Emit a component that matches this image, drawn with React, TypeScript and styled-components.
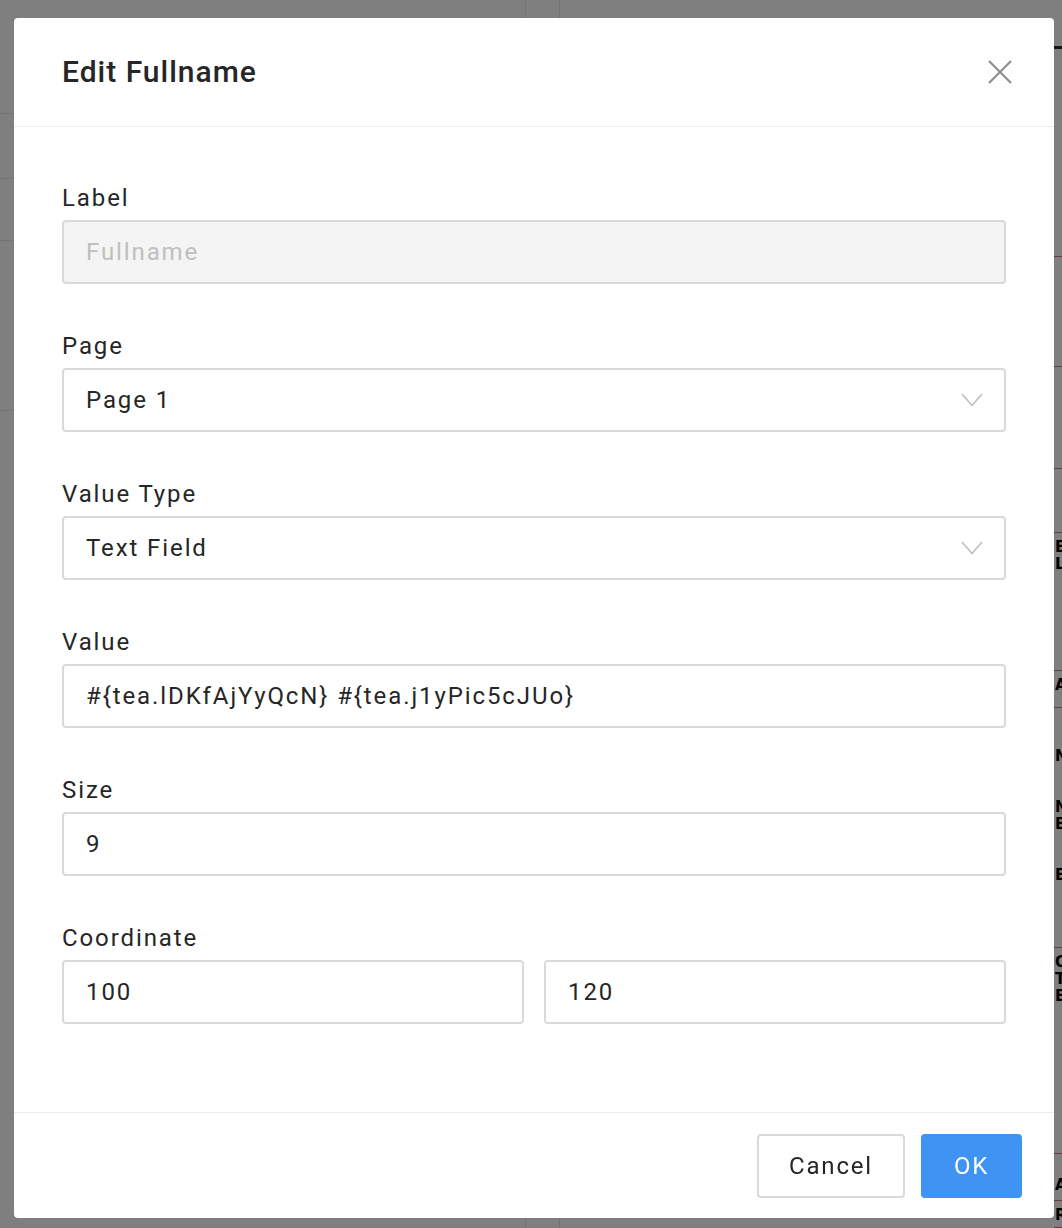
import React from 'react';
import styled, { createGlobalStyle } from 'styled-components';

const GlobalStyle = createGlobalStyle`
  html, body {
    margin: 0;
    padding: 0;
  }
  body {
    font-family: Roboto, "Liberation Sans", sans-serif;
    background: #ffffff;
  }
  * {
    box-sizing: border-box;
  }
`;

// underlying page, mostly hidden by the overlay
const Page = styled.div`
  width: 1062px;
  height: 1228px;
  display: grid;
  grid-template-columns: 526px 34px 494px 1fr;
  overflow: hidden;
`;

const PageCol = styled.div<{ $edge?: boolean }>`
  display: flex;
  flex-direction: column;
  border-right: ${(p) => (p.$edge ? '1px solid #e6e6e6' : 'none')};
`;

const PageRow = styled.div<{ $h: number; $line?: 'red' | 'dark' | 'grey' }>`
  height: ${(p) => p.$h}px;
  flex: none;
  border-bottom: ${(p) =>
    p.$line === 'red'
      ? '1px solid #d67272'
      : p.$line === 'dark'
      ? '3px solid #2a2a2a'
      : p.$line === 'grey'
      ? '1px solid #e6e6e6'
      : 'none'};
  padding: 6px 0 0 1px;
  font-family: "DejaVu Sans", sans-serif;
  font-size: 15px;
  font-weight: 700;
  line-height: 17px;
  color: #000;
  white-space: pre;
  overflow: hidden;
`;

const Overlay = styled.div`
  position: fixed;
  inset: 0;
  background: rgba(0, 0, 0, 0.5);
  padding: 18px 0 0 14px;
`;

const Modal = styled.div`
  width: 1040px;
  height: 1200px;
  background: #ffffff;
  border-radius: 4px;
  display: flex;
  flex-direction: column;
`;

const Header = styled.div`
  height: 109px;
  flex: none;
  border-bottom: 1px solid #ededed;
  display: flex;
  align-items: center;
  justify-content: space-between;
  padding: 0 42px 0 48px;
`;

const Title = styled.h2`
  margin: 0;
  font-size: 30px;
  font-weight: 500;
  color: #262626;
  letter-spacing: 1px;
  line-height: 36px;
`;

const CloseButton = styled.button`
  border: none;
  background: none;
  padding: 0;
  width: 24px;
  height: 24px;
  display: flex;
  cursor: pointer;
`;

const Body = styled.div`
  flex: 1;
  padding: 53px 48px 0 48px;
`;

const Field = styled.div`
  margin-bottom: 44px;
`;

const Label = styled.div`
  font-size: 24px;
  line-height: 36px;
  letter-spacing: 1.9px;
  color: #262626;
  margin-bottom: 4px;
`;

const Input = styled.input<{ $disabled?: boolean }>`
  display: block;
  width: 100%;
  height: 64px;
  border: 2px solid #dadada;
  border-radius: 4px;
  padding: 0 22px;
  font-family: Roboto, "Liberation Sans", sans-serif;
  font-size: 24px;
  letter-spacing: 1.9px;
  color: ${(p) => (p.$disabled ? '#bfbfbf' : '#262626')};
  background: ${(p) => (p.$disabled ? '#f4f4f4' : '#ffffff')};
  outline: none;
`;

const Select = styled.div`
  display: flex;
  align-items: center;
  justify-content: space-between;
  height: 64px;
  border: 2px solid #dadada;
  border-radius: 4px;
  padding: 0 21px 0 22px;
  font-size: 24px;
  letter-spacing: 1.9px;
  color: #262626;
`;

const Pair = styled.div`
  display: grid;
  grid-template-columns: 1fr 1fr;
  gap: 20px;
`;

const Footer = styled.div`
  flex: none;
  height: 106px;
  border-top: 1px solid #ededed;
  display: flex;
  justify-content: flex-end;
  align-items: flex-start;
  gap: 16px;
  padding: 21px 32px 0 0;
`;

const Button = styled.button<{ $primary?: boolean }>`
  height: 64px;
  width: ${(p) => (p.$primary ? 101 : 148)}px;
  border-radius: 4px;
  border: 2px solid ${(p) => (p.$primary ? '#3f93f2' : '#dadada')};
  background: ${(p) => (p.$primary ? '#3f93f2' : '#ffffff')};
  color: ${(p) => (p.$primary ? '#ffffff' : '#262626')};
  font-family: Roboto, "Liberation Sans", sans-serif;
  font-size: 24px;
  letter-spacing: 1.8px;
  padding: 0;
  cursor: pointer;
`;

const Chevron = () => (
  <svg width="22" height="14" viewBox="0 0 22 14" fill="none">
    <polyline points="1,1 11,12.5 21,1" stroke="#bfbfbf" strokeWidth="1.6" />
  </svg>
);

const CloseIcon = () => (
  <svg width="24" height="24" viewBox="0 0 24 24" fill="none">
    <line x1="1" y1="1" x2="23" y2="23" stroke="#8c8c8c" strokeWidth="2.2" />
    <line x1="23" y1="1" x2="1" y2="23" stroke="#8c8c8c" strokeWidth="2.2" />
  </svg>
);

const rightRows: { h: number; line?: 'red' | 'dark'; text?: string }[] = [
  { h: 49, line: 'dark' },
  { h: 208, line: 'red' },
  { h: 110, line: 'red' },
  { h: 102, line: 'red' },
  { h: 64, line: 'red' },
  { h: 138, line: 'red', text: 'EMAIL\nLIST' },
  { h: 37, line: 'red', text: 'A:' },
  { h: 240, line: 'red', text: '\n\nNAME\n\n\nNO\nBIRTH\n\n\nEND' },
  { h: 206, line: 'red', text: 'OTHER\nTITLE\nEDIT' },
  { h: 47, line: 'red', text: '\nA' },
  { h: 27, line: 'red', text: 'R' },
];

export default function App() {
  return (
    <>
      <GlobalStyle />
      <Page>
        <PageCol $edge>
          <PageRow $h={114} $line="grey" />
          <PageRow $h={65} $line="grey" />
          <PageRow $h={62} $line="grey" />
          <PageRow $h={170} $line="grey" />
        </PageCol>
        <PageCol $edge />
        <PageCol />
        <PageCol>
          {rightRows.map((r, i) => (
            <PageRow key={i} $h={r.h} $line={r.line}>
              {r.text}
            </PageRow>
          ))}
        </PageCol>
      </Page>

      <Overlay>
        <Modal>
          <Header>
            <Title>Edit Fullname</Title>
            <CloseButton aria-label="Close">
              <CloseIcon />
            </CloseButton>
          </Header>

          <Body>
            <Field>
              <Label>Label</Label>
              <Input $disabled readOnly value="Fullname" />
            </Field>
            <Field>
              <Label>Page</Label>
              <Select>
                <span>Page 1</span>
                <Chevron />
              </Select>
            </Field>
            <Field>
              <Label>Value Type</Label>
              <Select>
                <span>Text Field</span>
                <Chevron />
              </Select>
            </Field>
            <Field>
              <Label>Value</Label>
              <Input readOnly value="#{tea.lDKfAjYyQcN} #{tea.j1yPic5cJUo}" />
            </Field>
            <Field>
              <Label>Size</Label>
              <Input readOnly value="9" />
            </Field>
            <Field>
              <Label>Coordinate</Label>
              <Pair>
                <Input readOnly value="100" />
                <Input readOnly value="120" />
              </Pair>
            </Field>
          </Body>

          <Footer>
            <Button>Cancel</Button>
            <Button $primary>OK</Button>
          </Footer>
        </Modal>
      </Overlay>
    </>
  );
}
